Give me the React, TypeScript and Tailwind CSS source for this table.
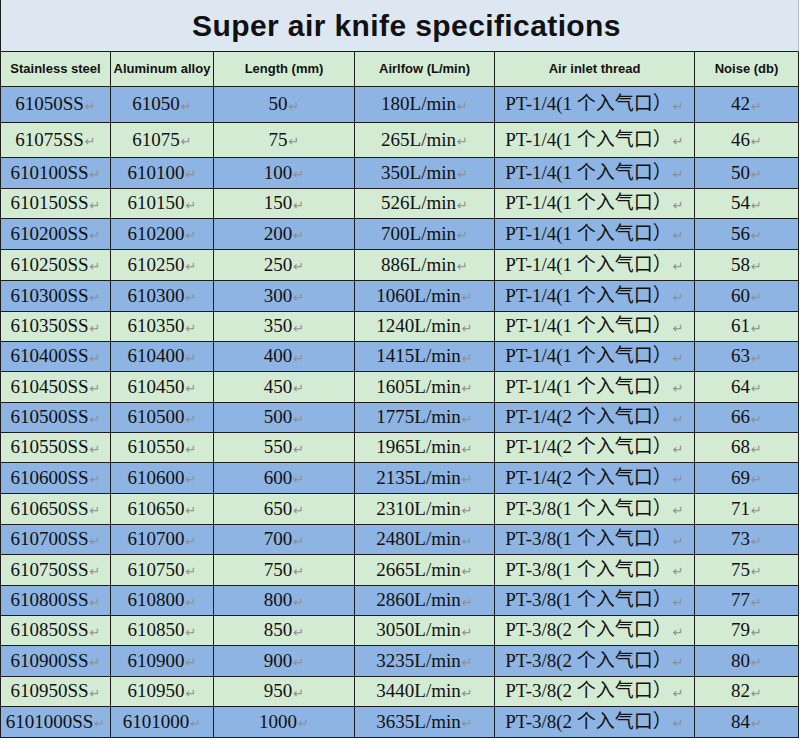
const cols = "grid grid-cols-[110px_103px_141px_140px_200px_1fr]";

const headers = ["Stainless steel", "Aluminum alloy", "Length (mm)", "Airlfow (L/min)", "Air inlet thread", "Noise (db)"];

// [length, airflow, thread size, inlets, noise]
const specs: [number, number, string, number, number][] = [
  [50, 180, "1/4", 1, 42],
  [75, 265, "1/4", 1, 46],
  [100, 350, "1/4", 1, 50],
  [150, 526, "1/4", 1, 54],
  [200, 700, "1/4", 1, 56],
  [250, 886, "1/4", 1, 58],
  [300, 1060, "1/4", 1, 60],
  [350, 1240, "1/4", 1, 61],
  [400, 1415, "1/4", 1, 63],
  [450, 1605, "1/4", 1, 64],
  [500, 1775, "1/4", 2, 66],
  [550, 1965, "1/4", 2, 68],
  [600, 2135, "1/4", 2, 69],
  [650, 2310, "3/8", 1, 71],
  [700, 2480, "3/8", 1, 73],
  [750, 2665, "3/8", 1, 75],
  [800, 2860, "3/8", 1, 77],
  [850, 3050, "3/8", 2, 79],
  [900, 3235, "3/8", 2, 80],
  [950, 3440, "3/8", 2, 82],
  [1000, 3635, "3/8", 2, 84],
];

// measured row heights, px (border included)
const heights = [36, 35, 31, 30, 31, 31, 31, 30, 30, 31, 30, 30, 31, 31, 30, 31, 30, 30, 31, 30, 31];

function Mark() {
  return <span className="ml-[1px] text-[13px] text-[#8f8f8f] font-['DejaVu_Sans',sans-serif] relative top-[2px]">↵</span>;
}

function Cell({text, last}: {text: string, last?: boolean}) {
  return (
    <div className={"flex items-center justify-center whitespace-nowrap " + (last ? "" : "border-r border-[#1c1c1c]")}>
      <span>{text}</span><Mark/>
    </div>
  );
}

export default function App() {
  return (
    <div className="w-[800px] h-[740px] bg-white overflow-hidden">
      <div className="w-[799px] border-l border-[#1c1c1c]">
        <div className="h-[52px] bg-[#dde7f2] border-b border-[#1c1c1c] border-r border-r-[#b5bcc6] flex items-center justify-center pl-[14px]">
          <h1 className="font-['Liberation_Sans',Arial,sans-serif] font-bold text-[30px] text-[#111] tracking-[0.4px]">
            Super air knife specifications
          </h1>
        </div>

        <div className={cols + " h-[35px] bg-[#d4ebd3] border-b border-r border-[#1c1c1c]"}>
          {headers.map((h, i) => (
            <div key={h}
                 className={"flex items-center justify-center font-['Liberation_Sans',Arial,sans-serif] font-bold text-[13px] text-[#111] " + (i < 5 ? "border-r border-[#1c1c1c]" : "")}>
              {h}
            </div>
          ))}
        </div>

        {specs.map(([len, flow, size, inlets, noise], i) => (
          <div key={len}
               style={{height: heights[i]}}
               className={cols + " border-b border-r border-[#1c1c1c] text-[19px] text-[#111] font-['Liberation_Serif','Noto_Sans_CJK_SC',serif] " + (i % 2 === 0 ? "bg-[#8db4e2]" : "bg-[#d4ebd3]")}>
            <Cell text={`610${len}SS`}/>
            <Cell text={`610${len}`}/>
            <Cell text={`${len}`}/>
            <Cell text={`${flow}L/min`}/>
            <Cell text={`PT-${size}(${inlets} 个入气口）`}/>
            <Cell text={`${noise}`} last/>
          </div>
        ))}
      </div>
    </div>
  )
}
